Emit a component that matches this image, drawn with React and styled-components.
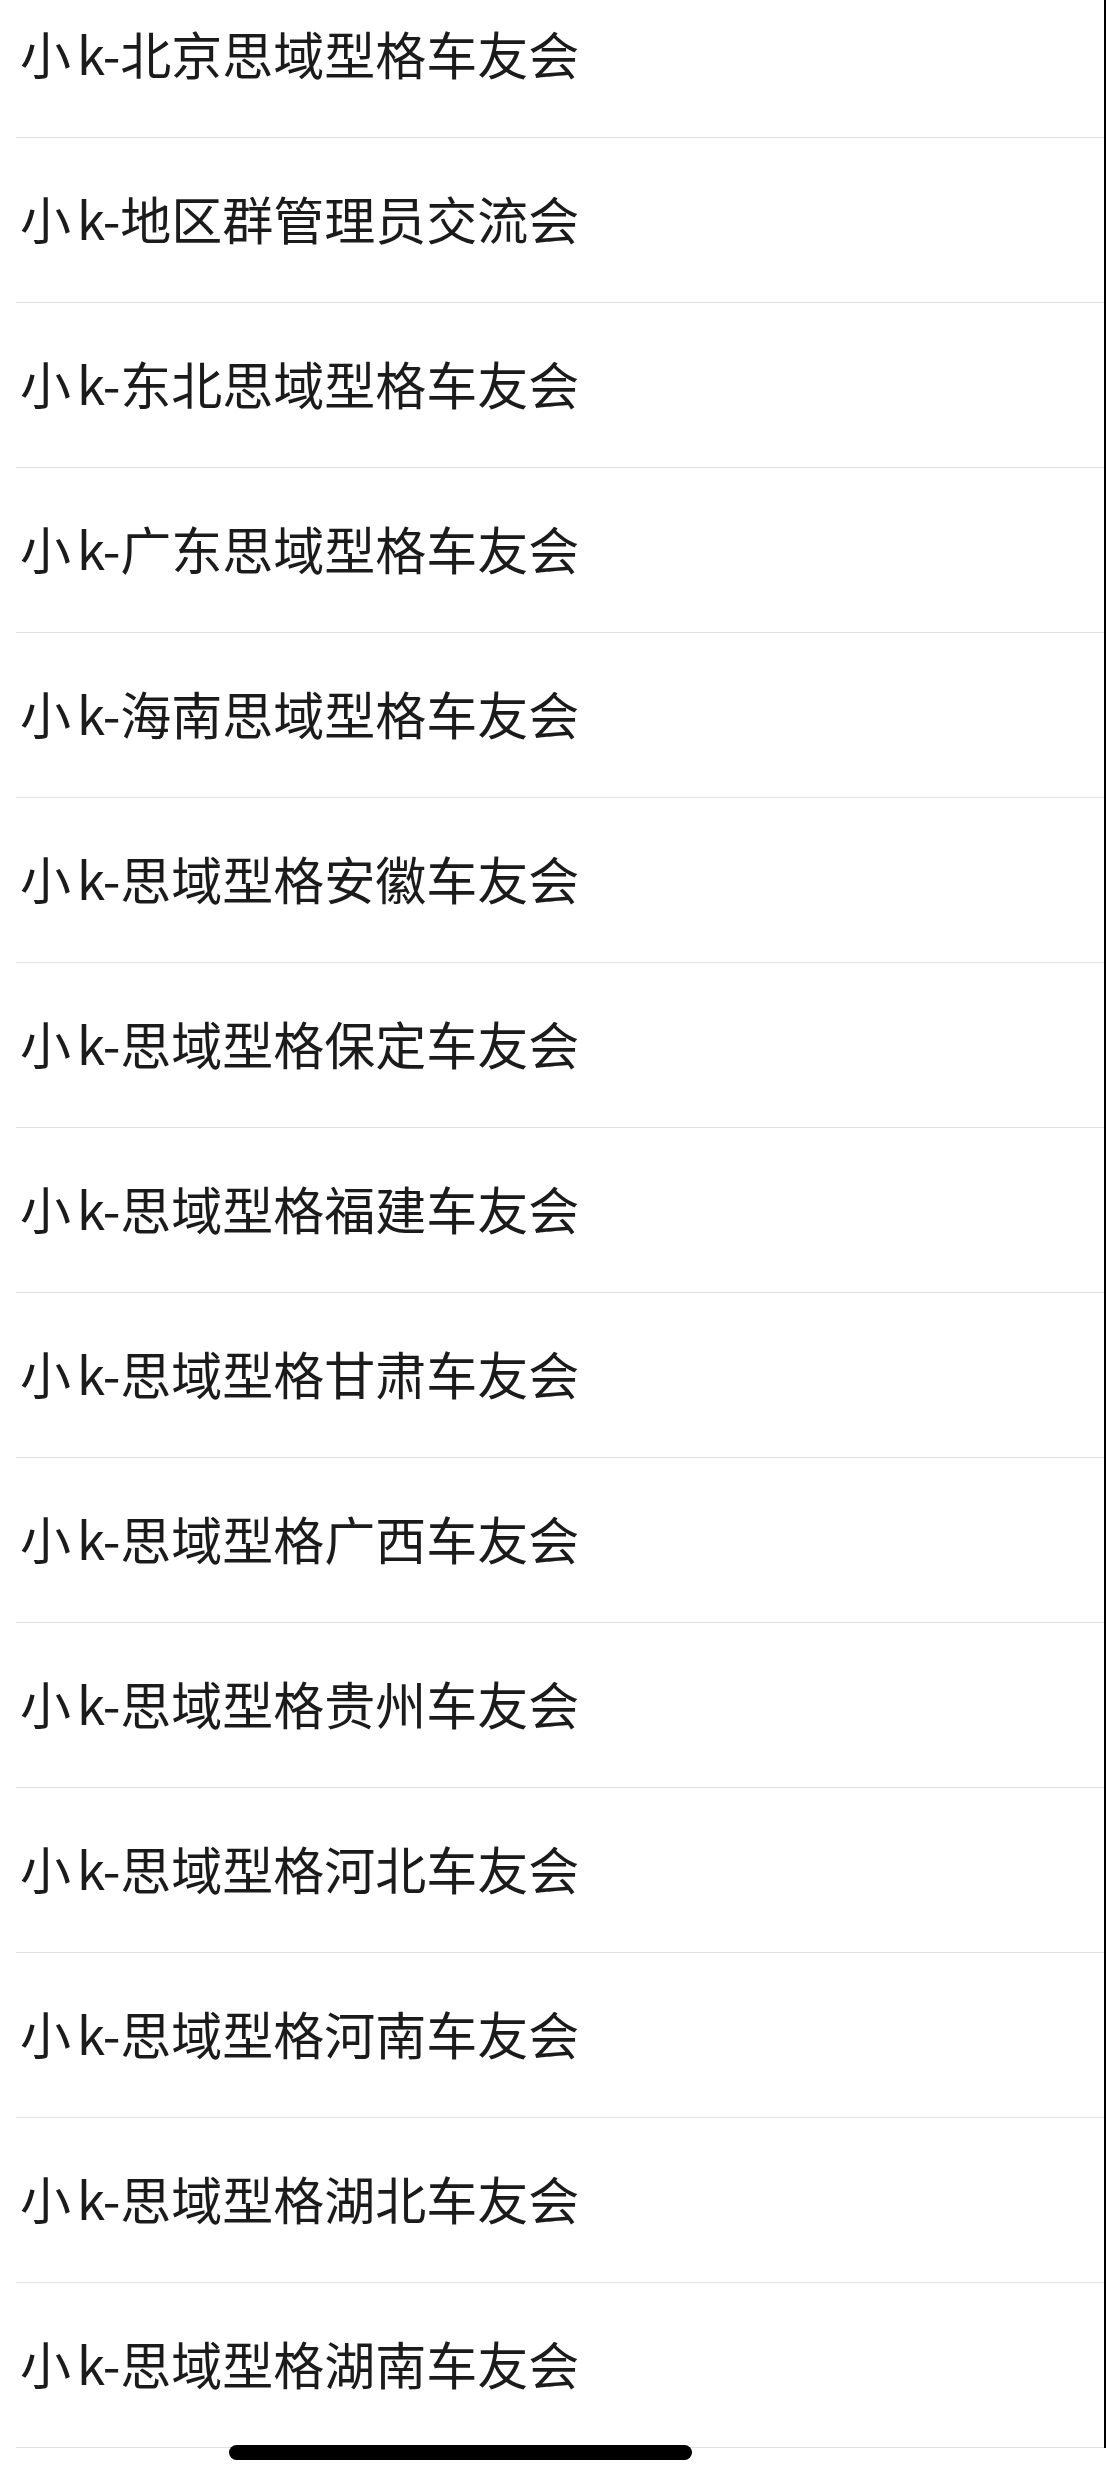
import React from 'react';
import styled, { createGlobalStyle } from 'styled-components';

const GlobalStyle = createGlobalStyle`
  html, body {
    margin: 0;
    padding: 0;
    background: #fff;
  }
  body {
    font-family: "Noto Sans CJK SC", "Noto Sans", sans-serif;
    overflow: hidden;
  }
`;

const Screen = styled.div`
  position: relative;
  width: 1106px;
  height: 2484px;
  overflow: hidden;
  background: #fff;
`;

const GroupList = styled.ul`
  list-style: none;
  margin: -27px 0 0 0;
  padding: 0 0 0 16px;
  border-right: 2px solid #000;
`;

const GroupRow = styled.li`
  box-sizing: border-box;
  height: 165px;
  display: flex;
  align-items: center;
  padding: 0 0 5px 4px;
  border-bottom: 1px solid #e2e2e2;
  font-size: 51px;
  color: #1b1b1b;
  white-space: nowrap;
`;

const Prefix = styled.span`
  margin-right: 6px;
`;

const HomeIndicator = styled.div`
  position: absolute;
  left: 229px;
  top: 2445px;
  width: 463px;
  height: 15px;
  border-radius: 8px;
  background: #000;
`;

const groups = [
  'k-北京思域型格车友会',
  'k-地区群管理员交流会',
  'k-东北思域型格车友会',
  'k-广东思域型格车友会',
  'k-海南思域型格车友会',
  'k-思域型格安徽车友会',
  'k-思域型格保定车友会',
  'k-思域型格福建车友会',
  'k-思域型格甘肃车友会',
  'k-思域型格广西车友会',
  'k-思域型格贵州车友会',
  'k-思域型格河北车友会',
  'k-思域型格河南车友会',
  'k-思域型格湖北车友会',
  'k-思域型格湖南车友会',
];

const App = () => {
  return (
    <Screen>
      <GlobalStyle />
      <GroupList>
        {groups.map((name) => (
          <GroupRow key={name}>
            <Prefix>小</Prefix>
            {name}
          </GroupRow>
        ))}
      </GroupList>
      <HomeIndicator />
    </Screen>
  );
};

export default App;
